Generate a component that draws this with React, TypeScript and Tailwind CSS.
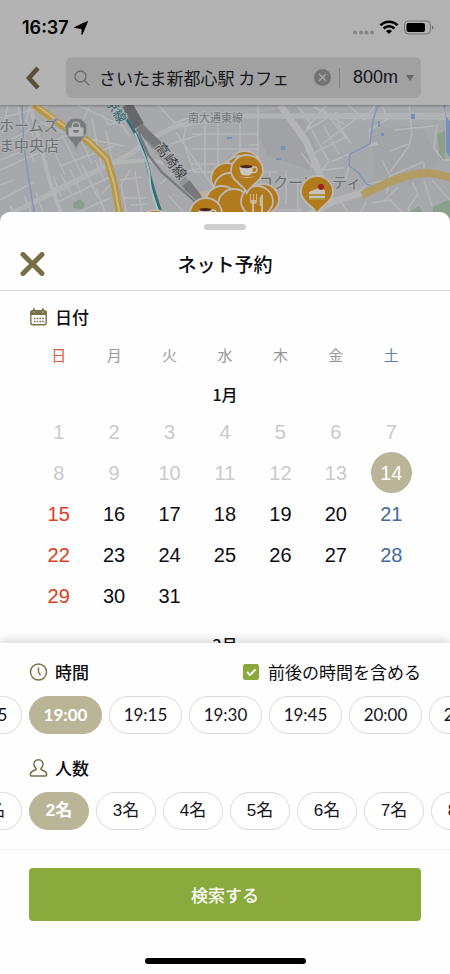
import { useState } from "react";
import type { ReactNode } from "react";

const WEEKDAYS = ["日", "月", "火", "水", "木", "金", "土"];
const WEEKS: (number | null)[][] = [
  [1, 2, 3, 4, 5, 6, 7],
  [8, 9, 10, 11, 12, 13, 14],
  [15, 16, 17, 18, 19, 20, 21],
  [22, 23, 24, 25, 26, 27, 28],
  [29, 30, 31, null, null, null, null],
];
const TODAY = 14;
const TIMES = ["18:45", "19:00", "19:15", "19:30", "19:45", "20:00", "20:15"];
const PARTY = ["1名", "2名", "3名", "4名", "5名", "6名", "7名", "8名"];

function Pin({ x, y, children }: { x: number; y: number; children?: ReactNode }) {
  return (
    <g transform={`translate(${x} ${y})`}>
      <path
        d="M0 22C-3 14-16 10-16 0A16 16 0 1 1 16 0C16 10 3 14 0 22Z"
        fill="#b07a1d"
        stroke="#bdb9b2"
        strokeWidth="1.800"
      />
      {children}
    </g>
  );
}

function Cup() {
  return (
    <g>
      <path d="M5 -4h2.200a2.500 2.500 0 0 1 0 5.500h-3" fill="none" stroke="#c9c6c0" strokeWidth="1.300" />
      <path d="M-7.500-4.500h13.500c0 5-1.500 9-4.500 9h-4.500c-3 0-4.500-4-4.500-9Z" fill="#c9c6c0" />
      <ellipse cx="-0.700" cy="-4.300" rx="6.200" ry="1.600" fill="#4c2517" />
      <path d="M-9 4.500c2 2 15 2 17.500 0-1 3-15.500 3-17.500 0Z" fill="#c9c6c0" />
    </g>
  );
}

function StreetMap() {
  return (
    <svg
      className="block h-[117px] w-full shrink-0"
      viewBox="0 105 450 117"
      preserveAspectRatio="xMidYMin slice"
      aria-label="地図"
      fontFamily="'Noto Sans CJK JP', sans-serif"
    >
      <rect y="105" width="450" height="117" fill="#a6a8ab" />
      <path d="M259 113l37-7 20 42-7 22-42-15-8-20Z" fill="#a0a2a6" />
      <path d="M371 130l50-5 20 38-25 24-40-8Z" fill="#a2a4a7" />
      <path d="M73 203l7-4 5 4-2 6-10-1ZM14 210l8-1v6h-8ZM437 134l8-3v30l-5-1ZM433 207l17-8v18h-17ZM409 212l10-6 6 12h-16Z" fill="#8aa08b" />
      <path d="M197 192l17-3 14 33h-20Z" fill="#b8b1a0" />

      <g fill="none" stroke="#b5b7b9" strokeWidth="1.500">
        <path d="M0 118l48-12M0 145l30-15M8 105l-6 28M18 106l6 30 10 26M30 106l-4 14 10 22M0 170l38-17M0 160l31-12M40 122l52 23M34 150l44-20M50 142l15 33M62 135l20 40M76 128l16 36M92 118l10 50M106 130l6 30M84 138l40 8M60 166l54-20M78 105l46 22M90 105l-12 26M53 176l8 20M61 174l10 20M70 169l12 26M82 164l16 34M95 160l10 22M52 190l60-28M58 202l56-27M70 216l40-18M96 188l12 32M116 178l-14 16M130 170l-9 15 7 34M120 180l22-3M124 198l22 0M130 205l18-1M135 171l8 48M0 200l34-18M10 206l10 16M24 196l12 26M36 192l10 30M0 185l14-5M103 115l5 9 13 0 9 13" />
        <path d="M159 106l16 17 16-6 259 2M187 121l-4 20 11 31 30 0M168 145l34-11M192 134h66M192 149h66M192 164h32M205 118v56M218 118v52M240 120v34M258 105v60M160 184l12-10 30-6M168 195l20 22M176 132l42 62M234 172h44M270 170v48M278 180h20v36M286 170v34M262 210h40M250 145h8" />
        <path d="M297 105l14 19-10 14M314 107l30 17M326 105l-20 24M337 112l-30 18M323 109l24 30M348 105l17 15 10-15M338 123l13 21M324 126l15 28M312 130l16 30M301 136l12 26M314 153l32-16M322 144l34-25M331 162l46-20M301 153l12 15M330 160l-8 10 22-2M378 144l-10 2M382 106l6 13-19 11 2 12M394 130l40-4M409 106l3 28-3 12-19 26M437 124l-3 24 9 12h7M390 151l18-7M382 160l8 16 33-14M390 176l-3 18M424 162v15M350 163l-5 18M352 196l16-12 26-5M372 203l18-3 21 22M398 187l-14 14M412 182l6 12-10 14 5 14M424 180l8 26M432 180l18 20M340 200l14 22M366 202l-10 20" />
      </g>
      <path d="M0 219L132 153l18-14 26-13 60-10 214-1" fill="none" stroke="#b1b3b5" strokeWidth="5" />
      <path d="M30 105l20 77 14 40M108 163l43-3 20 5" fill="none" stroke="#b3b5b6" strokeWidth="4" />
      <path d="M280 105l26 36 15 36 3 18M296 222l36-20 32-10" fill="none" stroke="#b5b5b5" strokeWidth="7" />
      <path d="M22 105l2 42 9 59 3 16M378 105l-5 15-3 24-20 10-1 12 10 7 7 11 14 5" fill="none" stroke="#8494b6" strokeWidth="1.500" />
      <path d="M445 105v10l5 6v36l-4-5v-37l-3-10ZM411 114h4v5h-4ZM378 121h2v6h-2ZM381 133h3v3h-3ZM281 146h4v4h-4ZM276 158h5v2h-5ZM227 137h5v2h-5Z" fill="#7890bd" />

      <path d="M34 105l32 23 22 13 19 18 7 24 7 38" fill="none" stroke="#ba963f" strokeWidth="7" />
      <path d="M35 104l32 24 22 13 18 18 7 24 7 38" fill="none" stroke="#c4b78c" strokeWidth="2" />
      <path d="M362 195c20-10 40-20 62-22 10 0 18 2 28 5" fill="none" stroke="#b39c62" strokeWidth="8" />

      <path d="M116 105c17 20 27 41 32 62 4 22 11 38 16 55" fill="none" stroke="#316d79" strokeWidth="3" />
      <path d="M135 133c8 22 15 32 15 49 2 17 8 25 10 38" fill="none" stroke="#abc0c3" strokeWidth="2" />
      <path d="M125 105l15 22 25 30 38 50" fill="none" stroke="#929395" strokeWidth="9" />
      <path d="M127 105l12 21" stroke="#666769" strokeWidth="11" />
      <path d="M139 127l21 20M186 183l16 21" stroke="#77787a" strokeWidth="9" />
      <path d="M139 133l9 21 14 18 40 35" fill="none" stroke="#77797c" strokeWidth="3" />
      <path d="M141 134l10 22 12 15 39 35" fill="none" stroke="#abacaf" strokeWidth="1" />

      <g stroke="#b0b2b4" strokeWidth="2" paintOrder="stroke">
        <text x="-1" y="131" fontSize="15" fill="#6d7073">ホームズ</text>
        <text x="-1" y="151" fontSize="15" fill="#6d7073">ま中央店</text>
        <text x="188" y="122" fontSize="11" fill="#77797b">南大通東線</text>
        <text x="258" y="188" fontSize="15" fill="#696c6f">コクーンシティ</text>
        <text x="0" y="5" fontSize="14" fill="#3b3d40" transform="translate(171 161) rotate(53)" textAnchor="middle">高崎線</text>
        <text x="0" y="5" fontSize="13" fill="#2b6670" transform="translate(113 105) rotate(57)" textAnchor="middle">埼京線</text>
      </g>

      <g transform="translate(76 130)">
        <path d="M0 20C-2 11-11 8-11-1A11 11 0 1 1 11-1C11 8 2 11 0 20Z" fill="#787b7e" stroke="#a0a3a6" />
        <path d="M-7-2h14v8H-7ZM-4-2v-2a4 4 0 0 1 8 0v2" fill="#b5b7b9" stroke="#b5b7b9" strokeWidth="1" />
        <path d="M-3-3v-1a3 3 0 0 1 6 0v1ZM-3 0a3 3 0 0 0 6 0" fill="#787b7e" />
      </g>

      <Pin x={155} y={226} />
      <Pin x={245} y={167} />
      <Pin x={240} y={172} />
      <Pin x={227} y={179} />
      <Pin x={230} y={189} />
      <Pin x={222} y={202} />
      <Pin x={234} y={205} />
      <Pin x={263} y={200} />
      <Pin x={257} y={202}>
        <path d="M-7-8v7c0 2 1 3 2 3v10h2V2c2 0 3-1 3-3v-7h-1v6h-2v-6h-1v6h-2v-6ZM6-8c-4 2-4 8-3 12h1v8h2Z" fill="#c7bd9d" />
      </Pin>
      <Pin x={247} y={171}>
        <Cup />
      </Pin>
      <Pin x={206} y={214}>
        <Cup />
      </Pin>
      <Pin x={317} y={192}>
        <path d="M-8 0L4-5 8-1V8H-8Z" fill="#c8c4ba" />
        <path d="M-8 2H8v2H-8ZM-8 6H8v2H-8Z" fill="#ac9544" />
        <circle cx="4" cy="-5" r="3" fill="#9b2522" />
      </Pin>
    </svg>
  );
}

function StatusBar() {
  return (
    <div className="flex h-[55px] items-center justify-between pr-4 pl-[22px]">
      <div className="flex items-center gap-[5px]">
        <span className="font-['Inter',sans-serif] text-[18px] font-semibold text-black">16:37</span>
        <svg width="14" height="14" viewBox="0 0 14 14" aria-hidden="true">
          <path d="M13.500.5L8 13.500V7.500L.5 6.500Z" fill="#000" stroke="#000" strokeLinejoin="round" />
        </svg>
      </div>
      <svg width="82" height="16" viewBox="0 0 82 16" aria-hidden="true">
        <g fill="#858585">
          <circle cx="3" cy="12.500" r="2" />
          <circle cx="9" cy="12.500" r="2" />
          <circle cx="14.500" cy="12.500" r="2" />
          <circle cx="20" cy="12.500" r="2" />
        </g>
        <g fill="none" stroke="#000" strokeWidth="2.600">
          <path d="M28.500 5.300a12 12 0 0 1 17 0" />
          <path d="M31.500 8.500a8 8 0 0 1 11 0" />
        </g>
        <path d="M34 11a4.500 4.500 0 0 1 6 0l-3 3Z" fill="#000" />
        <rect x="52.500" y="1" width="26" height="13" rx="4" fill="none" stroke="#737373" />
        <rect x="54.500" y="3" width="18.500" height="9" rx="2" fill="#000" />
        <path d="M80 5.500c2 .5 2 3.500 0 4Z" fill="#737373" />
      </svg>
    </div>
  );
}

function SearchHeader() {
  return (
    <div className="flex h-[50px] items-start gap-[25px] pt-[2px] pr-[29px] pl-[25px]">
      <button type="button" aria-label="戻る" className="flex h-[41px] w-4 items-center">
        <svg width="16" height="24" viewBox="0 0 16 24" aria-hidden="true">
          <path d="M13 2L4 12l9 10" fill="none" stroke="#575034" strokeWidth="4.500" />
        </svg>
      </button>
      <div className="flex h-[41px] min-w-0 flex-1 items-center rounded-md bg-[#a1a1a1] pr-[6px] pl-2">
        <svg width="16" height="16" viewBox="0 0 16 16" aria-hidden="true" className="shrink-0">
          <circle cx="6.500" cy="6.500" r="5.500" fill="none" stroke="#686868" strokeWidth="1.300" />
          <path d="M10.500 10.500L15 15" stroke="#686868" strokeWidth="1.300" />
        </svg>
        <input
          type="text"
          aria-label="検索キーワード"
          defaultValue="さいたま新都心駅 カフェ"
          className="ml-[9px] h-8 min-w-0 flex-1 bg-transparent font-['Noto_Sans_CJK_JP',sans-serif] text-[17px] text-[#15151c] outline-none"
        />
        <button type="button" aria-label="クリア" className="shrink-0">
          <svg width="17" height="17" viewBox="0 0 17 17" aria-hidden="true" className="block">
            <circle cx="8.500" cy="8.500" r="8.500" fill="#737373" />
            <path d="M5 5l7 7M12 5l-7 7" stroke="#ababab" strokeWidth="1.200" />
          </svg>
        </button>
        <span className="mr-[13px] ml-2 h-5 w-px shrink-0 bg-[#808080]" />
        <select
          aria-label="検索範囲"
          className="w-[52px] shrink-0 appearance-none bg-transparent font-['Liberation_Sans',sans-serif] text-[18px] text-[#15151c]"
        >
          <option>800m</option>
        </select>
        <svg width="10" height="6" viewBox="0 0 10 6" aria-hidden="true" className="shrink-0">
          <path d="M1 0h8L5 6Z" fill="#6a6a6a" />
        </svg>
      </div>
    </div>
  );
}

function Calendar({ selected, onSelect }: { selected: number; onSelect: (d: number) => void }) {
  const tone = (day: number, col: number) => {
    if (day === selected) return "bg-[#bbb598] text-white font-medium";
    if (day < TODAY) return "text-[#cacaca]";
    if (col === 0) return "text-[#d8401f]";
    if (col === 6) return "text-[#416a9f]";
    return "text-[#0c0c14]";
  };
  return (
    <div className="px-[31px]">
      <table className="w-full table-fixed border-collapse">
        <thead>
          <tr className="h-9">
            {WEEKDAYS.map((d, i) => (
              <th
                key={d}
                scope="col"
                className={`text-[15px] leading-5 font-normal ${
                  i === 0 ? "text-[#de5a3e]" : i === 6 ? "text-[#5b7fac]" : "text-[#98989c]"
                }`}
              >
                {d}
              </th>
            ))}
          </tr>
        </thead>
        <tbody>
          <tr className="h-[38px]">
            <th colSpan={7} scope="colgroup" className="pt-1 text-[16px] leading-6 font-medium">
              1月
            </th>
          </tr>
          {WEEKS.map((week, r) => (
            <tr key={r} className="h-[41px]">
              {week.map((day, c) => (
                <td key={c} className="p-0 text-center">
                  {day !== null && (
                    <button
                      type="button"
                      onClick={() => onSelect(day)}
                      disabled={day < TODAY}
                      className={`mx-auto flex size-[41px] items-center justify-center rounded-full font-['Liberation_Sans',sans-serif] text-[20px] ${tone(day, c)}`}
                    >
                      {day}
                    </button>
                  )}
                </td>
              ))}
            </tr>
          ))}
        </tbody>
      </table>
      <h3 className="mt-4 text-center text-[16px] leading-6 font-medium">2月</h3>
    </div>
  );
}

function SectionTitle({ icon, children }: { icon: ReactNode; children: ReactNode }) {
  return (
    <h2 className="flex items-center gap-[7px] text-[17px] leading-6 font-medium text-[#0c0c10]">
      {icon}
      {children}
    </h2>
  );
}

const CalendarIcon = (
  <svg width="19" height="18" viewBox="0 0 19 18" aria-hidden="true">
    <rect x="1.800" y="2.800" width="15.400" height="14" rx="2" fill="none" stroke="#777047" strokeWidth="1.400" />
    <path d="M1.500 3h16v4h-16ZM4 .5h2v3H4ZM13 .5h2v3h-2Z" fill="#777047" />
    <path d="M4.500 3.500h1v1h-1ZM13.500 3.500h1v1h-1Z" fill="#fff" />
    <path d="M5 10.500h10M5 13.500h10" stroke="#777047" strokeWidth="1.600" strokeDasharray="1.600 1.100" />
  </svg>
);

const ClockIcon = (
  <svg width="19" height="18" viewBox="0 0 19 18" aria-hidden="true">
    <circle cx="9.500" cy="9" r="8" fill="none" stroke="#777047" strokeWidth="1.400" />
    <path d="M9.500 4.500V9l2 3.500" fill="none" stroke="#777047" strokeWidth="1.400" />
  </svg>
);

const PersonIcon = (
  <svg width="19" height="18" viewBox="0 0 19 18" aria-hidden="true">
    <path
      d="M9.500.8C6.500.8 4.800 2.800 5 5.500c.1 1.800 1 2.800 1.800 3.700.8 1-.2 1.800-1.800 2.200-2.500.6-3.500 1.800-3.700 4.100 0 .9.4 1.500 1.200 1.500h14c.8 0 1.200-.6 1.200-1.500-.2-2.300-1.200-3.500-3.700-4.100-1.600-.4-2.600-1.200-1.800-2.200.8-.9 1.700-1.900 1.800-3.700.2-2.700-1.500-4.700-4.500-4.700Z"
      fill="none"
      stroke="#777047"
      strokeWidth="1.500"
    />
  </svg>
);

const PILL = "h-[38px] shrink-0 rounded-full border text-[17px] leading-6";
const PILL_ON = "border-[#bbb598] bg-[#bbb598] text-white";
const PILL_OFF = "border-[#dadada] bg-white text-[#15151c]";

export default function App() {
  const [day, setDay] = useState(14);
  const [time, setTime] = useState("19:00");
  const [party, setParty] = useState("2名");

  return (
    <div className="flex h-screen flex-col overflow-hidden bg-white font-['Noto_Sans_CJK_JP',sans-serif] text-[#0c0c10]">
      <header className="z-10 shrink-0 bg-[#b2b2b2] shadow-[0_1px_2px_rgba(0,0,0,0.3)]">
        <StatusBar />
        <SearchHeader />
      </header>
      <StreetMap />

      <main className="z-10 -mt-[10px] flex min-h-0 flex-1 flex-col rounded-t-[10px] bg-[#fefefe]">
        <div className="shrink-0 border-b border-[#d9d9d9] pt-3">
          <div className="mx-auto h-[6px] w-[42px] rounded-full bg-[#cecece]" />
          <div className="grid h-[60px] grid-cols-[24px_1fr_24px] items-center px-5 pt-2">
            <button type="button" aria-label="閉じる">
              <svg width="25" height="24" viewBox="0 0 25 24" aria-hidden="true">
                <path d="M3 2.500l19 19M22 2.500l-19 19" stroke="#777047" strokeWidth="5" strokeLinecap="round" />
              </svg>
            </button>
            <h1 className="text-center text-[19px] leading-7 font-medium">ネット予約</h1>
          </div>
        </div>

        <section className="min-h-0 flex-1 overflow-y-auto [scrollbar-width:none]">
          <div className="px-[29px] pt-[14px] pb-[8px]">
            <SectionTitle icon={CalendarIcon}>日付</SectionTitle>
          </div>
          <Calendar selected={day} onSelect={setDay} />
        </section>

        <section className="z-10 shrink-0 overflow-x-clip bg-[#fefefe] pt-[17px] pb-[19px] shadow-[0_-3px_8px_rgba(0,0,0,0.15)]">
          <div className="flex items-center justify-between px-[29px]">
            <SectionTitle icon={ClockIcon}>時間</SectionTitle>
            <label className="flex items-center gap-[9px] text-[17px] leading-6">
              <span className="grid size-4 place-items-center">
                <input
                  type="checkbox"
                  defaultChecked
                  className="peer col-start-1 row-start-1 size-4 appearance-none rounded-[2px] border border-[#8aaa3d] checked:bg-[#8aaa3d]"
                />
                <svg
                  width="16"
                  height="16"
                  viewBox="0 0 16 16"
                  aria-hidden="true"
                  className="pointer-events-none invisible col-start-1 row-start-1 peer-checked:visible"
                >
                  <path d="M4 8l3 3 5.500-5.500" fill="none" stroke="#fff" strokeWidth="1.800" />
                </svg>
              </span>
              前後の時間を含める
            </label>
          </div>
          <div className="mt-3 -ml-[51px] flex gap-[7px]">
            {TIMES.map((t) => (
              <button
                key={t}
                type="button"
                aria-pressed={t === time}
                onClick={() => setTime(t)}
                className={`w-[73px] font-['Lato',sans-serif] ${PILL} ${t === time ? `${PILL_ON} font-bold` : PILL_OFF}`}
              >
                {t}
              </button>
            ))}
          </div>

          <div className="mt-[22px] px-[29px]">
            <SectionTitle icon={PersonIcon}>人数</SectionTitle>
          </div>
          <div className="mt-3 -ml-[38px] flex gap-[7px]">
            {PARTY.map((p) => (
              <button
                key={p}
                type="button"
                aria-pressed={p === party}
                onClick={() => setParty(p)}
                className={`w-[60px] font-['Liberation_Sans','Noto_Sans_CJK_JP',sans-serif] ${PILL} ${p === party ? `${PILL_ON} font-bold` : PILL_OFF}`}
              >
                {p}
              </button>
            ))}
          </div>
        </section>

        <footer className="z-10 shrink-0 border-t border-[#f1f1f1] bg-[#fefefe] px-[29px] pt-[18px] pb-[10px]">
          <button
            type="button"
            className="h-[53px] w-full rounded-[4px] bg-[#8aaa3d] text-[17px] leading-6 font-medium text-white"
          >
            検索する
          </button>
          <div className="mx-auto mt-[37px] h-[6px] w-[161px] rounded-full bg-black" />
        </footer>
      </main>
    </div>
  );
}
